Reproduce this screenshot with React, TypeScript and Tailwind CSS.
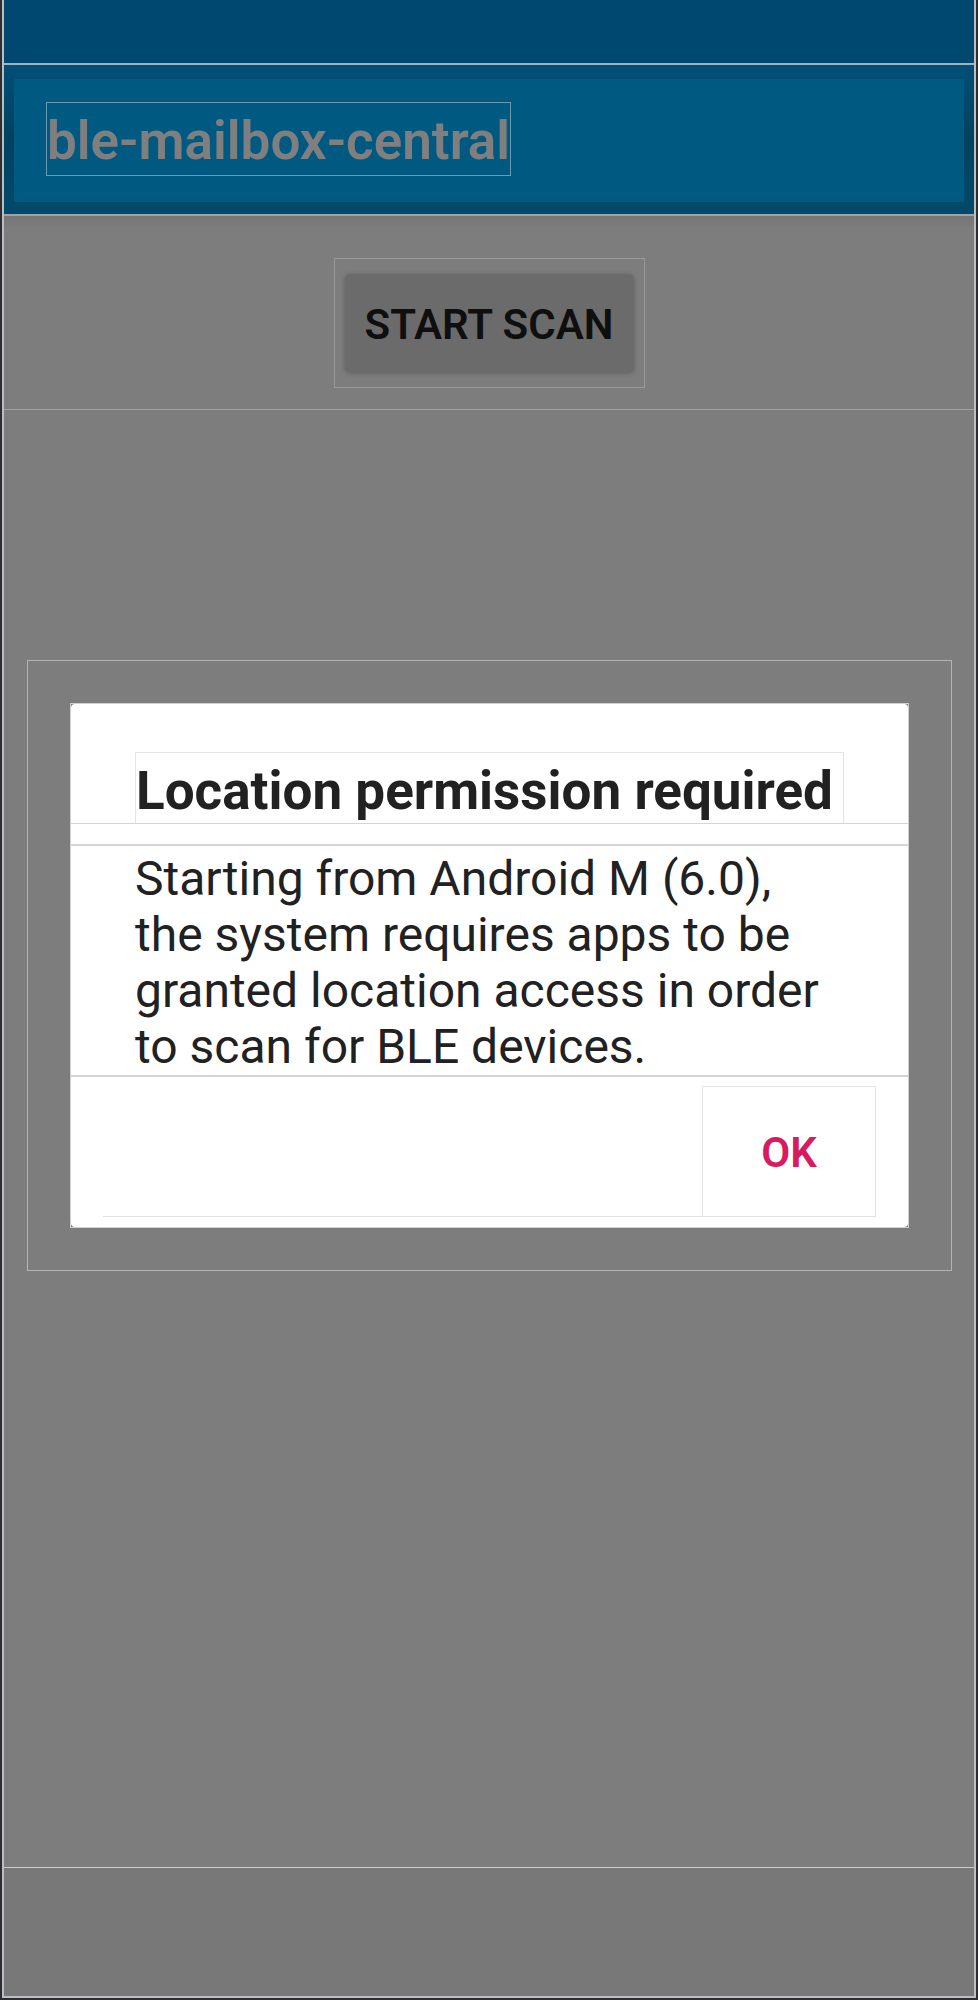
function StatusBar() {
  return <div className="h-[63px] shrink-0 bg-[#004870]" />;
}

function Toolbar() {
  return (
    <header className="border-b-2 border-[#a0a2a5] bg-[#004f73]">
      <div className="bg-linear-to-b from-[#005177] via-[#00425f] to-[#004b6c] px-[10px] pt-[14px] pb-[12px] shadow-[inset_4px_0_6px_#00507440,inset_-4px_0_6px_#00507440]">
        <div className="flex bg-[#005980] px-8 pt-[23px] pb-[26px]">
          <h1 className="border border-[#6d9aae] pt-1 text-[53px] leading-[68px] font-semibold whitespace-nowrap text-[#7f7f7f]">
            ble-mailbox-central
          </h1>
        </div>
      </div>
    </header>
  );
}

function ScanRow() {
  return (
    <div className="flex justify-center border-b border-[#a0a0a0] bg-linear-to-b from-[#757575] to-[#7d7d7d] to-[12px] pt-[42px] pb-[21px]">
      <div className="border border-[#999999] px-[10px] pt-[15px] pb-[15px]">
        <button
          type="button"
          className="block h-[98px] min-w-[289px] rounded-[5px] bg-[#6b6b6b] px-4 pt-[2px] text-[42px] font-semibold whitespace-nowrap text-[#0f0f0f] shadow-[0_1px_5px_#00000040]"
        >
          START SCAN
        </button>
      </div>
    </div>
  );
}

function PermissionDialog() {
  return (
    <div className="absolute inset-0 flex items-center justify-center pr-[22px] pb-px pl-[23px]">
      <div className="w-full border border-[#b4b4b4] p-[42px]">
        <div
          role="alertdialog"
          aria-labelledby="dialog-title"
          aria-describedby="dialog-message"
          className="border border-[#d0d0d0] bg-[#7d7d7d]"
        >
          <div className="rounded-[4px] bg-white text-[#212121]">
            <div className="border-b border-[#d4d4d4] px-16 pt-12">
              <h2
                id="dialog-title"
                className="border-x border-t border-[#e4e4e4] pt-[6px] text-[53px] leading-[64px] font-bold"
              >
                Location permission required
              </h2>
            </div>
            <div className="mt-5 border-y-2 border-[#d4d4d4] px-16 pt-[5px]">
              <p id="dialog-message" className="text-[48px] leading-[56px]">
                Starting from Android M (6.0), the system requires apps to be granted location access
                in order to scan for BLE devices.
              </p>
            </div>
            <div className="px-8 pt-[9px] pb-[10px]">
              <div className="flex justify-end border-b border-[#e2e2e2]">
                <button
                  type="button"
                  className="h-[130px] w-[174px] border-x border-t border-[#e6e6e6] pt-[2px] text-[42px] font-semibold text-[#d81b60]"
                >
                  OK
                </button>
              </div>
            </div>
          </div>
        </div>
      </div>
    </div>
  );
}

export default function App() {
  return (
    <div className="flex min-h-screen flex-col bg-[#2b2e33] px-[2px] pb-[2px] font-['Roboto',sans-serif]">
      <div className="flex grow flex-col border-x-2 border-b-2 border-[#bebebe] bg-[#7d7d7d]">
        <StatusBar />
        <main className="relative flex grow flex-col border-t-2 border-t-[#9db3c1]">
          <Toolbar />
          <ScanRow />
          <PermissionDialog />
        </main>
        <nav aria-label="System" className="h-[129px] shrink-0 border-t border-[#cccccc] bg-[#787878]" />
      </div>
    </div>
  );
}
